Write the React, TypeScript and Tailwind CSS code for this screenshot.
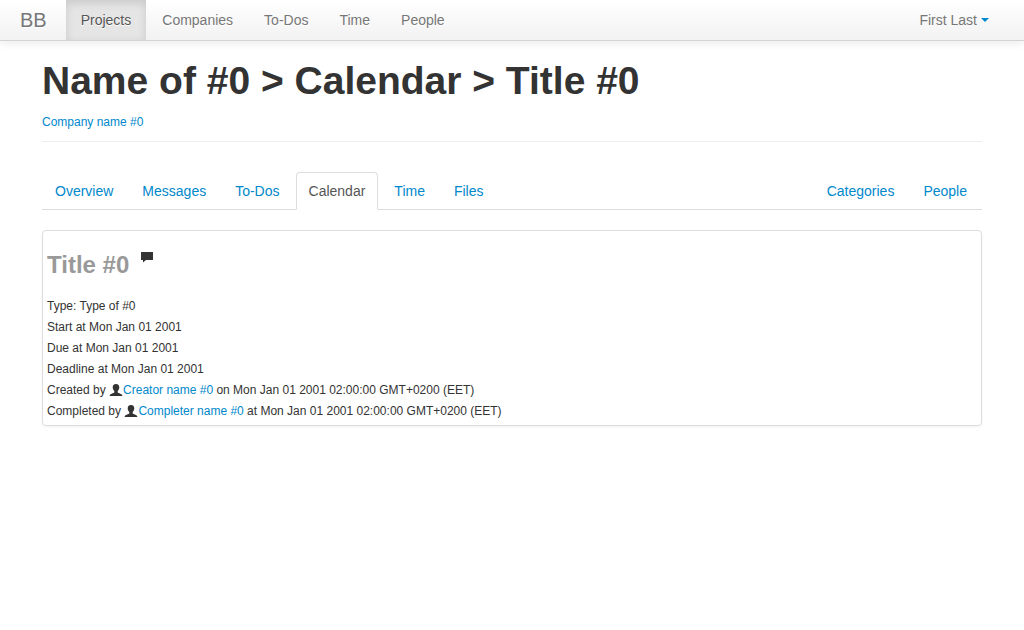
import type { ReactNode } from "react";

const navItems = ["Projects", "Companies", "To-Dos", "Time", "People"];
const tabs = ["Overview", "Messages", "To-Dos", "Calendar", "Time", "Files"];
const rightTabs = ["Categories", "People"];

function NavLink({ label, active }: { label: string; active?: boolean }) {
  return (
    <a
      href="#"
      aria-current={active ? "page" : undefined}
      className={
        active
          ? "bg-[#e5e5e5] px-[15px] py-2.5 text-[#555] shadow-[inset_0_3px_8px_rgba(0,0,0,0.125)]"
          : "px-[15px] py-2.5 text-[#777]"
      }
    >
      {label}
    </a>
  );
}

function Tab({ label, active }: { label: string; active?: boolean }) {
  return (
    <a
      href="#"
      aria-current={active ? "page" : undefined}
      className={
        active
          ? "-mb-px rounded-t border border-[#ddd] border-b-white bg-white px-3 py-2 text-[#555]"
          : "-mb-px border border-transparent px-3 py-2 text-[#08c]"
      }
    >
      {label}
    </a>
  );
}

function UserIcon() {
  return (
    <svg viewBox="0 0 14 14" className="inline-block size-3.5 align-text-top" fill="#333" aria-hidden="true">
      <path d="M7 1C4.700 1 3.600 2.500 3.700 4.600c.1 1.600.7 2.700 1.600 3.500v1.300C4.700 10.300.7 10.600.7 12.400V13h12.600v-.6c0-1.800-4-2.100-4.600-3V8.100c.9-.8 1.500-1.900 1.600-3.500C10.400 2.500 9.300 1 7 1z" />
    </svg>
  );
}

function PersonLink({ children }: { children: ReactNode }) {
  return (
    <>
      <UserIcon />
      <a href="#" className="text-[#08c]">
        {children}
      </a>
    </>
  );
}

export default function App() {
  return (
    <div className="min-h-screen bg-white font-['Liberation_Sans',Arial,sans-serif] text-sm leading-5 text-[#333]">
      <header className="flex justify-between border-b border-[#d4d4d4] bg-linear-to-b from-white to-[#f2f2f2] shadow-[0_1px_10px_rgba(0,0,0,0.1)] [text-shadow:0_1px_0_#fff]">
        <nav className="flex gap-px" aria-label="Main">
          <a href="#" className="py-2.5 pr-[18px] pl-5 text-xl leading-5 text-[#777]">
            BB
          </a>
          {navItems.map((label) => (
            <NavLink key={label} label={label} active={label === "Projects"} />
          ))}
        </nav>
        <button type="button" className="mr-5 flex items-center gap-1 px-[15px] py-2.5 text-[#777]">
          First Last
          <svg viewBox="0 0 8 4" className="h-1 w-2" fill="#08c" aria-hidden="true">
            <path d="M0 0h8L4 4z" />
          </svg>
        </button>
      </header>

      <main className="px-[42px] pt-5">
        <div className="border-b border-[#eee] pb-[9px]">
          <h1 className="text-[39px] leading-10 font-bold">Name of #0 &gt; Calendar &gt; Title #0</h1>
          <p className="mt-[11px] text-xs leading-5">
            <a href="#" className="text-[#08c]">
              Company name #0
            </a>
          </p>
        </div>

        <nav className="mt-[30px] flex justify-between border-b border-[#ddd]" aria-label="Project">
          <div className="flex gap-[3px]">
            {tabs.map((label) => (
              <Tab key={label} label={label} active={label === "Calendar"} />
            ))}
          </div>
          <div className="flex gap-[3px] pr-0.5">
            {rightTabs.map((label) => (
              <Tab key={label} label={label} />
            ))}
          </div>
        </nav>

        <section className="mt-5 rounded border border-[#ddd] px-1 pt-1 pb-[3px] text-xs leading-[21px] shadow-[0_1px_3px_rgba(0,0,0,0.055)]">
          <div className="mt-2.5 mb-[11px] flex items-start gap-[11px]">
            <h2 className="text-2xl leading-10 font-bold text-[#999]">Title #0</h2>
            <a href="#" aria-label="Comments" className="pt-1.5">
              <svg viewBox="0 0 14 14" className="size-3.5" fill="#333" aria-hidden="true">
                <path d="M1 1h12v8H6l-3 2.500V9H1z" />
              </svg>
            </a>
          </div>
          <p>Type: Type of #0</p>
          <p>Start at Mon Jan 01 2001</p>
          <p>Due at Mon Jan 01 2001</p>
          <p>Deadline at Mon Jan 01 2001</p>
          <p>
            Created by <PersonLink>Creator name #0</PersonLink> on Mon Jan 01 2001 02:00:00 GMT+0200 (EET)
          </p>
          <p>
            Completed by <PersonLink>Completer name #0</PersonLink> at Mon Jan 01 2001 02:00:00 GMT+0200 (EET)
          </p>
        </section>
      </main>
    </div>
  );
}
